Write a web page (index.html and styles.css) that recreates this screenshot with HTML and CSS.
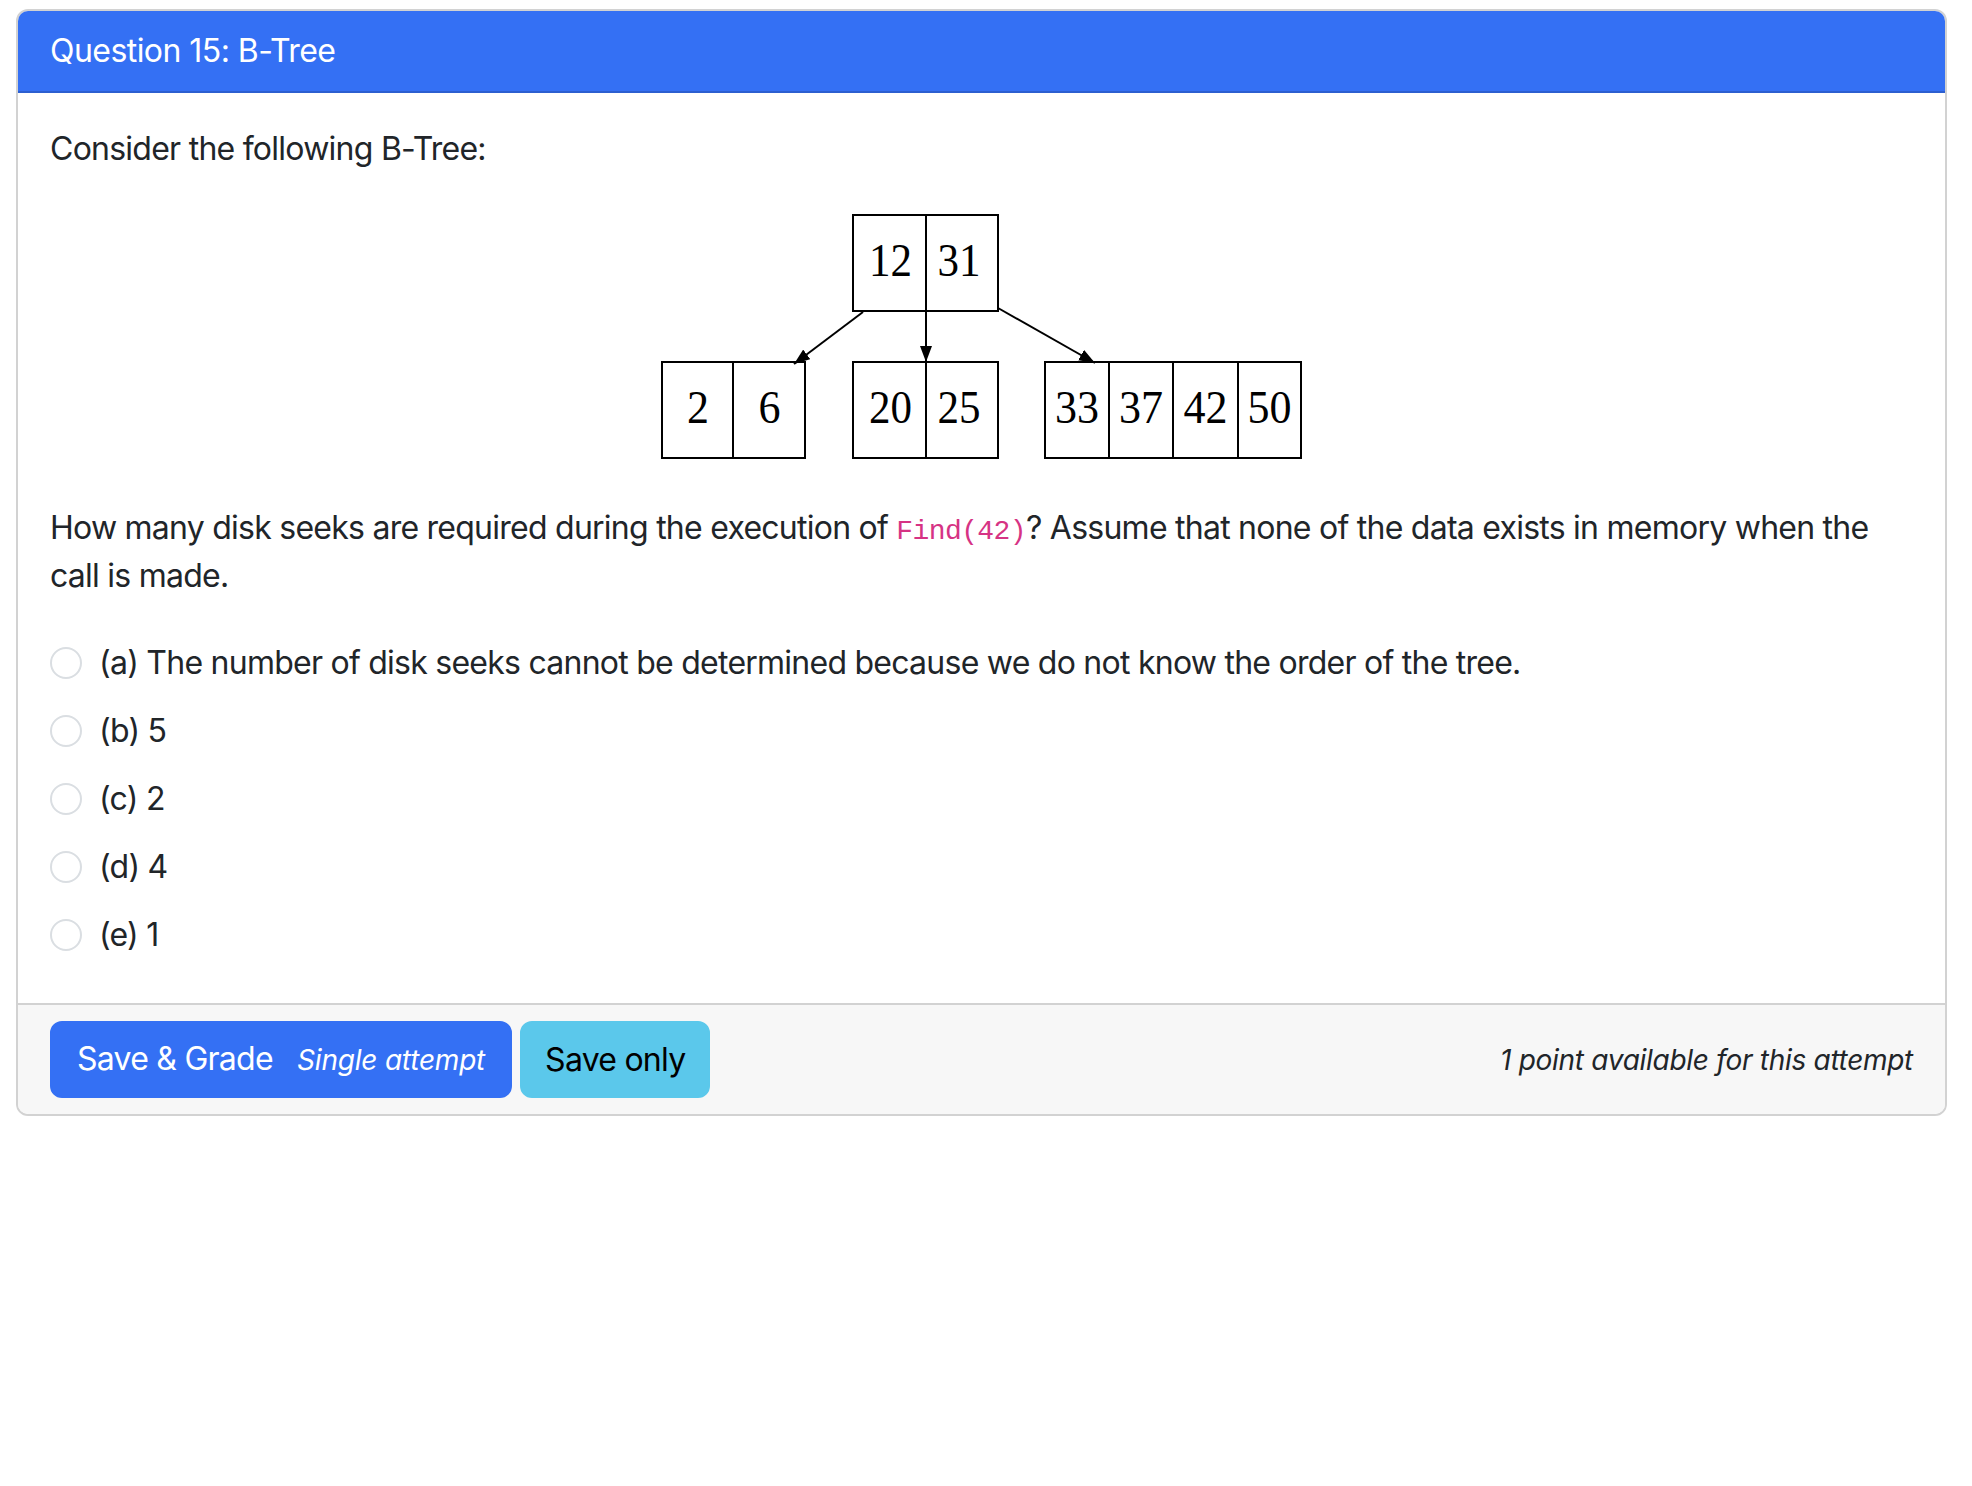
FILE: index.html
```html
<!DOCTYPE html>
<html lang="en">
<head>
<meta charset="utf-8">
<title>Question 15: B-Tree</title>
<link rel="stylesheet" href="styles.css">
</head>
<body>
<div class="page">
  <div class="card">
    <div class="card-header">Question 15: B-Tree</div>
    <div class="card-body">
      <p class="intro">Consider the following B-Tree:</p>
      <div class="figure">
        <svg class="tree" width="661" height="267" viewBox="0 0 661 267" xmlns="http://www.w3.org/2000/svg">
          <defs>
            <marker id="ah" markerWidth="16" markerHeight="12" refX="16" refY="6" orient="auto" markerUnits="userSpaceOnUse">
              <path d="M0,0 L16,6 L0,12 Z" fill="#000"/>
            </marker>
          </defs>
          <g fill="none" stroke="#000" stroke-width="2">
            <rect x="202" y="10" width="145" height="96"/>
            <line x1="275" y1="10" x2="275" y2="106"/>
            <rect x="11" y="157" width="143" height="96"/>
            <line x1="82" y1="157" x2="82" y2="253"/>
            <rect x="202" y="157" width="145" height="96"/>
            <line x1="275" y1="157" x2="275" y2="253"/>
            <rect x="394" y="157" width="256" height="96"/>
            <line x1="458" y1="157" x2="458" y2="253"/>
            <line x1="522" y1="157" x2="522" y2="253"/>
            <line x1="587" y1="157" x2="587" y2="253"/>
            <line x1="212" y1="107" x2="143" y2="159" marker-end="url(#ah)"/>
            <line x1="275" y1="106" x2="275" y2="157" marker-end="url(#ah)"/>
            <line x1="347" y1="103" x2="444" y2="158" marker-end="url(#ah)"/>
          </g>
          <g class="num">
            <text x="239.5" y="71" textLength="43" lengthAdjust="spacingAndGlyphs">12</text>
            <text x="308" y="71" textLength="43" lengthAdjust="spacingAndGlyphs">31</text>
            <text x="47" y="217.5" textLength="22" lengthAdjust="spacingAndGlyphs">2</text>
            <text x="118.5" y="217.5" textLength="22" lengthAdjust="spacingAndGlyphs">6</text>
            <text x="239.5" y="217.5" textLength="43" lengthAdjust="spacingAndGlyphs">20</text>
            <text x="308" y="217.5" textLength="43" lengthAdjust="spacingAndGlyphs">25</text>
            <text x="426" y="217.5" textLength="44" lengthAdjust="spacingAndGlyphs">33</text>
            <text x="490" y="217.5" textLength="44" lengthAdjust="spacingAndGlyphs">37</text>
            <text x="554.5" y="217.5" textLength="44" lengthAdjust="spacingAndGlyphs">42</text>
            <text x="618.5" y="217.5" textLength="44" lengthAdjust="spacingAndGlyphs">50</text>
          </g>
        </svg>
      </div>
      <p class="question">How many disk seeks are required during the execution of <code>Find(42)</code>? Assume that none of the data exists in memory when the call is made.</p>
      <div class="options">
        <label class="option"><input type="radio" name="ans" class="radio"><span>(a) The number of disk seeks cannot be determined because we do not know the order of the tree.</span></label>
        <label class="option"><input type="radio" name="ans" class="radio"><span>(b) 5</span></label>
        <label class="option"><input type="radio" name="ans" class="radio"><span>(c) 2</span></label>
        <label class="option"><input type="radio" name="ans" class="radio"><span>(d) 4</span></label>
        <label class="option"><input type="radio" name="ans" class="radio"><span>(e) 1</span></label>
      </div>
    </div>
    <div class="card-footer">
      <div class="buttons">
        <button class="btn btn-primary">Save &amp; Grade <small class="attempt">Single attempt</small></button>
        <button class="btn btn-info">Save only</button>
      </div>
      <div class="points">1 point available for this attempt</div>
    </div>
  </div>
</div>
</body>
</html>
```

FILE: styles.css
```css
* { box-sizing: border-box; }

html, body {
  margin: 0;
  padding: 0;
  background: #fff;
}

body {
  font-family: Inter, "Noto Sans", "Liberation Sans", sans-serif;
  font-size: 32px;
  line-height: 48px;
  color: #212529;
  letter-spacing: -0.75px;
}

.page {
  padding: 9px 25px 0 16px;
}

.card {
  border: 2px solid #d2d2d2;
  border-radius: 12px;
  overflow: hidden;
  background: #fff;
}

.card-header {
  background: #3470f4;
  color: #fff;
  padding: 16px 32px;
  border-bottom: 2px solid #2c5fd0;
  letter-spacing: -0.55px;
}

.card-body {
  padding: 32px 32px 34px;
}

.intro {
  margin: 0 0 32px;
}

.figure {
  display: flex;
  justify-content: center;
  margin-bottom: 32px;
}

.tree {
  display: block;
}

.num text {
  font-family: "Liberation Serif", "Times New Roman", serif;
  font-size: 47px;
  letter-spacing: 0;
  text-anchor: middle;
  fill: #000;
}

.question {
  margin: 0 0 29px;
}

code {
  font-family: "Liberation Mono", "DejaVu Sans Mono", monospace;
  font-size: 28px;
  line-height: 1;
  letter-spacing: -0.6px;
  color: #d63384;
}

.options {
  display: flex;
  flex-direction: column;
}

.option {
  display: flex;
  align-items: center;
  padding: 10px 0;
}

.radio {
  appearance: none;
  -webkit-appearance: none;
  width: 32px;
  height: 32px;
  margin: 0 17px 0 0;
  border: 2px solid #dadee2;
  border-radius: 50%;
  background: #fff;
  flex: none;
}

.card-footer {
  background: #f7f7f7;
  border-top: 2px solid #d2d2d2;
  padding: 16px 32px;
  display: flex;
  justify-content: space-between;
  align-items: center;
}

.buttons {
  display: flex;
  gap: 8px;
}

.btn {
  font-family: Inter, "Noto Sans", "Liberation Sans", sans-serif;
  font-size: 32px;
  line-height: 48px;
  letter-spacing: -0.75px;
  padding: 12px 25px;
  border: 2px solid transparent;
  border-radius: 12px;
  cursor: pointer;
}

.btn-primary {
  background: #3470f4;
  border-color: #3470f4;
  color: #fff;
}

.attempt {
  font-size: 28px;
  font-style: italic;
  letter-spacing: -0.2px;
  margin-left: 16px;
}

.btn-info {
  background: #5bc8eb;
  border-color: #5bc8eb;
  color: #000;
  padding: 12px 23px;
}

.points {
  font-size: 28px;
  font-style: italic;
  letter-spacing: -0.3px;
  color: #212529;
}
```
